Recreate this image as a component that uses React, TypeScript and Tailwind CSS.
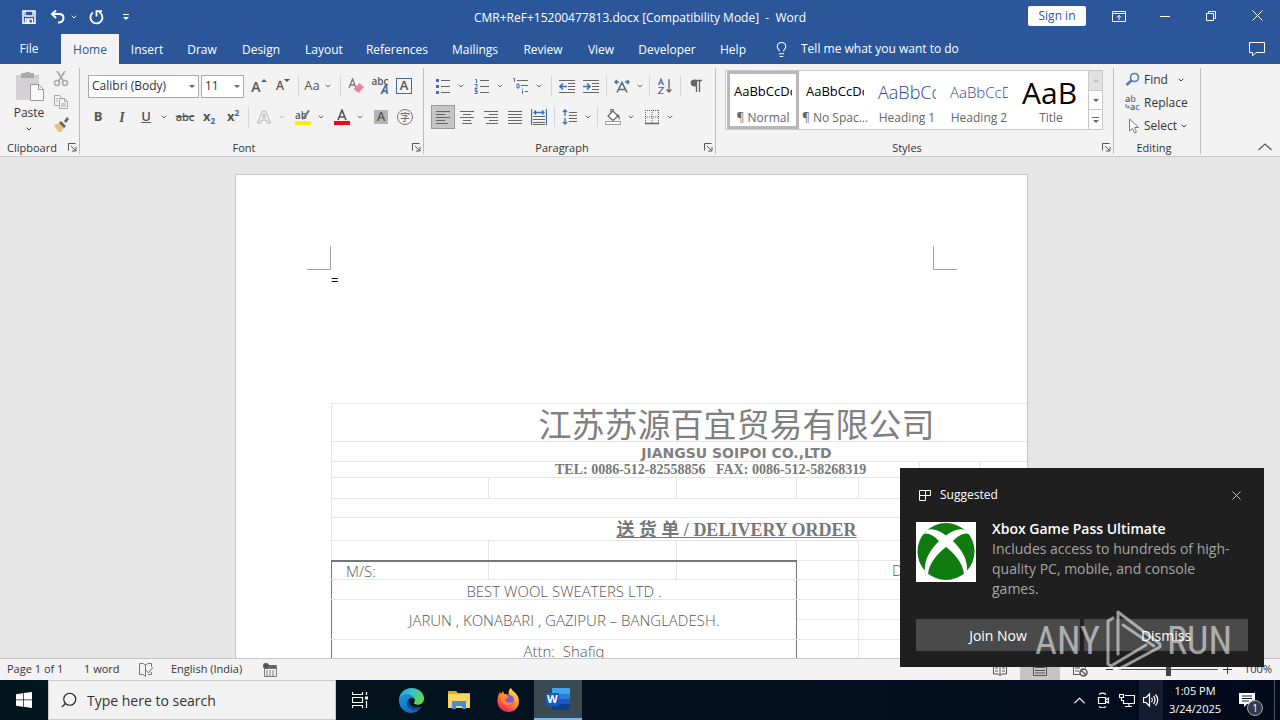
import type { ReactNode } from 'react';
import { ChevronDown, ChevronUp, Lightbulb, Search, X } from 'lucide-react';
import clsx from 'clsx';

const TABS = [
  { name: 'Insert', width: 'w-14' },
  { name: 'Draw', width: 'w-[54px]' },
  { name: 'Design', width: 'w-16' },
  { name: 'Layout', width: 'w-[62px]' },
  { name: 'References', width: 'w-[84px]' },
  { name: 'Mailings', width: 'w-[72px]' },
  { name: 'Review', width: 'w-16' },
  { name: 'View', width: 'w-[52px]' },
  { name: 'Developer', width: 'w-20' },
  { name: 'Help', width: 'w-[52px]' },
];

const STYLES = [
  { name: '¶ Normal', sample: 'AaBbCcDc', look: 'text-[13px] text-black' },
  { name: '¶ No Spac...', sample: 'AaBbCcDc', look: 'text-[13px] text-black' },
  { name: 'Heading 1', sample: 'AaBbCc', look: 'text-[18px] font-light text-[#1f4690]' },
  { name: 'Heading 2', sample: 'AaBbCcD', look: 'text-[15px] font-light text-[#1f4690]' },
  { name: 'Title', sample: 'AaB', look: 'text-[30px] text-black' },
];

function Icon({ children, size = 16, box = 16 }: { children: ReactNode; size?: number; box?: number }) {
  return (
    <svg width={size} height={size} viewBox={`0 0 ${box} ${box}`} fill="none" stroke="#666" strokeWidth="1" aria-hidden="true" className="shrink-0">
      {children}
    </svg>
  );
}

function Tool({ label, active, children }: { label: string; active?: boolean; children: ReactNode }) {
  return (
    <button
      aria-label={label}
      className={clsx('flex h-6 w-6 shrink-0 items-center justify-center text-[#555]', active && 'border border-[#9a9a9a] bg-[#c5c5c5]')}
    >
      {children}
    </button>
  );
}

function Caret({ label, last, faded }: { label: string; last?: boolean; faded?: boolean }) {
  return (
    <button aria-label={label} className={clsx('flex h-6 w-3 shrink-0 items-center justify-center', !last && 'mr-[3px]')}>
      <ChevronDown size={8} strokeWidth={3} color={faded ? '#b5b5b5' : '#666'} />
    </button>
  );
}

function Sep() {
  return <span className="mx-[3px] h-5 w-px shrink-0 bg-[#d5d5d5]" />;
}

function Group({ name, width, launcher, children }: { name: string; width: string; launcher?: boolean; children: ReactNode }) {
  return (
    <section aria-label={name} className={clsx('mt-1 flex h-[86px] shrink-0 flex-col border-r border-[#bdbdbd]', width)}>
      <div className="h-[70px]">{children}</div>
      <div className="flex h-4 items-center pt-[3px] pr-[2px]">
        <span className="flex-1 pr-1 text-center text-[11px] leading-4 text-[#333]">{name}</span>
        {launcher && (
          <button aria-label={`${name} settings`}>
            <Icon size={9} box={9}>
              <path d="M.5 7.5V.5h7M3 3l4.5 4.5M8 4v4H4" stroke="#555" />
            </Icon>
          </button>
        )}
      </div>
    </section>
  );
}

function TitleBar() {
  return (
    <header className="grid h-[34px] shrink-0 grid-cols-[1fr_auto_1fr] items-center bg-[#2b579a] text-white">
      <div className="flex items-center pl-[21px]">
        <button aria-label="Save">
          <Icon>
            <path d="M2 2h12v12.200H2z" stroke="#fff" strokeWidth="1.500" />
            <path d="M4 2v5h8V2M4.500 14v-4h7v4" stroke="#fff" strokeWidth="1.300" />
            <path d="M5.500 11h3v3h-3z" fill="#fff" stroke="none" />
          </Icon>
        </button>
        <button aria-label="Undo" className="ml-[13px]">
          <Icon>
            <path d="M6 1.500L2 5l4 4M2 5h7c6 0 6 8 0 8.500H8" stroke="#fff" strokeWidth="2" />
          </Icon>
        </button>
        <button aria-label="Undo list" className="ml-1">
          <ChevronDown size={8} strokeWidth={3} />
        </button>
        <button aria-label="Repeat" className="ml-[10px]">
          <Icon>
            <path d="M5 3.500a6 6 0 1 0 6-.5M8.500 7.500V2.200H14" stroke="#fff" strokeWidth="1.800" />
          </Icon>
        </button>
        <button aria-label="Customize toolbar" className="ml-[18px]">
          <Icon size={8} box={8}>
            <path d="M1 1.500h6" stroke="#fff" />
            <path d="M1 4h6L4 7z" fill="#fff" stroke="none" />
          </Icon>
        </button>
      </div>
      <h1 className="pt-[2px] text-xs whitespace-pre">CMR+ReF+15200477813.docx [Compatibility Mode]  -  Word</h1>
      <div className="flex h-full items-center justify-end pb-[3px]">
        <button className="h-5 w-[58px] rounded-xs bg-white pt-px text-xs text-[#2b579a]">Sign in</button>
        <button aria-label="Ribbon display options" className="ml-[26px]">
          <Icon size={14} box={14}>
            <path d="M.5 2.500h13v10H.5zM.5 4.500h13M7 11V6.500M4.800 8.500L7 6.300l2.200 2.200" stroke="#fff" />
          </Icon>
        </button>
        <button aria-label="Minimize" className="ml-[34px]">
          <Icon size={10} box={10}><path d="M0 5.500h10" stroke="#fff" /></Icon>
        </button>
        <button aria-label="Restore" className="ml-9">
          <Icon size={10} box={10}>
            <path d="M.5 2.500h7v7h-7zM2.500 2.500v-2h7v7h-2" stroke="#fff" />
          </Icon>
        </button>
        <button aria-label="Close" className="mr-[17px] ml-9">
          <Icon size={11} box={11}><path d="M.5.5l10 10M10.500.5l-10 10" stroke="#fff" /></Icon>
        </button>
      </div>
    </header>
  );
}

function TabBar() {
  return (
    <nav className="flex h-[30px] shrink-0 items-stretch bg-[#2b579a] text-xs text-white">
      <button className="mr-[3px] w-[58px]">File</button>
      <button className="w-[58px] bg-[#f3f3f3] pt-[2px] text-[#2b579a]">Home</button>
      {TABS.map(t => (
        <button key={t.name} className={clsx('pt-[2px] text-center', t.width)}>{t.name}</button>
      ))}
      <label className="ml-[14px] flex flex-1 items-center">
        <Lightbulb size={17} strokeWidth={1.5} />
        <input aria-label="Tell me what you want to do" placeholder="Tell me what you want to do" className="ml-[11px] w-48 placeholder:text-white" />
      </label>
      <button aria-label="Comments" className="mr-[14px]">
        <Icon size={18} box={18}>
          <path d="M1.500 2.500h15v10H8L4.500 16v-3.500h-3z" stroke="#fff" />
        </Icon>
      </button>
    </nav>
  );
}

function Combo({ label, value, width }: { label: string; value: string; width: string }) {
  return (
    <div className={clsx('relative h-[23px] shrink-0', width)}>
      <select aria-label={label} className="block h-full w-full appearance-none border border-[#ababab] bg-white pl-[3px] text-xs text-[#333]">
        <option>{value}</option>
      </select>
      <span className="pointer-events-none absolute top-[10px] right-1 border-x-[3px] border-t-[3px] border-x-transparent border-t-[#666]" />
    </div>
  );
}

function ClipboardGroup() {
  return (
    <Group name="Clipboard" width="w-20" launcher>
      <div className="flex pt-[3px]">
        <button className="ml-[13px] flex w-8 flex-col items-center text-xs text-[#333]">
          <Icon size={30} box={30}>
            <path d="M2 4h23v25H2z" fill="#d4d1d4" stroke="none" />
            <path d="M7 2h4a3 3 0 0 1 5 0h4v5H7z" fill="#aaa" stroke="none" />
            <path d="M16.500 13.500h8l5 5v11h-13z" fill="#fafafa" stroke="#999" />
            <path d="M24.500 13.500v5h5" stroke="#999" />
          </Icon>
          <span className="pt-[2px] leading-5">Paste</span>
          <ChevronDown size={8} strokeWidth={3} className="mt-[2px]" />
        </button>
        <div className="ml-2 flex flex-col gap-[7px]">
          <button aria-label="Cut">
            <Icon>
              <path d="M4 0l6.500 10M12 0L5.500 10" stroke="#aaa" strokeWidth="1.800" />
              <circle cx="4" cy="12" r="2.500" stroke="#aaa" strokeWidth="1.500" />
              <circle cx="12" cy="12" r="2.500" stroke="#aaa" strokeWidth="1.500" />
            </Icon>
          </button>
          <button aria-label="Copy">
            <Icon>
              <path d="M6 11.500H1.500v-10h5l3 3M6.500 4.500h5l3 3v7h-8zM11.500 4.500v3h3M3 4.500h2M3 7h2M8 10h5M8 12h5" stroke="#a8a8a8" />
            </Icon>
          </button>
          <button aria-label="Format painter">
            <Icon>
              <path d="M1 8l5-2 5 5-3 4H5z" fill="#e9c27b" stroke="none" />
              <path d="M6 6l2-2 5 5-2 2zM11 4l3-4 2 2-3 4z" fill="#666" stroke="none" />
            </Icon>
          </button>
        </div>
      </div>
    </Group>
  );
}

function FontGroup() {
  return (
    <Group name="Font" width="w-[344px]" launcher>
      <div className="flex h-9 items-center pl-2">
        <Combo label="Font" value="Calibri (Body)" width="w-[111px]" />
        <span className="w-[2px]" />
        <Combo label="Font size" value="11" width="w-[43px]" />
        <span className="w-[3px]" />
        <Tool label="Grow font"><span className="text-[14px] font-semibold">A</span><span className="mb-3 border-x-[3px] border-b-[3px] border-x-transparent border-b-[#44619d]" /></Tool>
        <Tool label="Shrink font"><span className="text-xs font-semibold">A</span><span className="mb-3 border-x-[3px] border-t-[3px] border-x-transparent border-t-[#555]" /></Tool>
        <Sep />
        <button className="w-5 text-[13px] text-[#555]">Aa</button>
        <Caret label="Change case options" />
        <Sep />
        <Tool label="Clear formatting">
          <Icon>
            <path d="M1 10L4.500 1 8 10M2.500 7h4" stroke="#777" strokeWidth="1.300" />
            <path d="M11.500 5L16 9l-5.500 6-5-4z" fill="#e8849b" stroke="none" />
          </Icon>
        </Tool>
        <Tool label="Phonetic guide">
          <span className="flex flex-col items-end text-[10px] leading-[8px] font-semibold"><span>abc</span><span className="text-xs leading-[10px] font-bold text-[#3d6cb0] italic">A</span></span>
        </Tool>
        <Tool label="Character border">
          <span className="flex h-4 w-4 items-center justify-center border border-[#44699f] text-[13px] font-semibold">A</span>
        </Tool>
      </div>
      <div className="flex h-[26px] items-center pl-[6px]">
        <Tool label="Bold"><span className="text-[13px] font-bold">B</span></Tool>
        <Tool label="Italic"><span className="font-['Liberation_Serif',serif] text-[14px] font-bold italic">I</span></Tool>
        <Tool label="Underline"><span className="text-[13px] font-semibold underline">U</span></Tool>
        <Caret label="Underline options" />
        <Tool label="Strikethrough"><span className="text-[11px] font-semibold line-through">abc</span></Tool>
        <Tool label="Subscript"><span className="text-[13px] font-bold">x</span><span className="mt-2 text-[8px] font-bold text-[#44619d]">2</span></Tool>
        <Tool label="Superscript"><span className="text-[13px] font-bold">x</span><span className="mb-2 text-[8px] font-bold text-[#44619d]">2</span></Tool>
        <Sep />
        <Tool label="Text effects">
          <Icon><path d="M1.500 14L6.500 2h3l5 12h-3l-1-3h-5l-1 3zM6.500 8.500h3L8 4.500z" stroke="#b5b5b5" /></Icon>
        </Tool>
        <Caret label="Text effects options" faded />
        <Tool label="Highlight">
          <Icon>
            <text x="0" y="10" fontSize="10" fontWeight="600" fill="#555" stroke="none">ab</text>
            <path d="M15 2l-6 8-2 1 1-3 5-7z" fill="#777" stroke="none" />
            <path d="M0 12h16v4H0z" fill="#ffee00" stroke="none" />
          </Icon>
        </Tool>
        <Caret label="Highlight options" />
        <Tool label="Font color">
          <Icon>
            <path d="M4 11L8 1l4 10M5.500 8h5" stroke="#555" strokeWidth="1.600" />
            <path d="M0 12h16v4H0z" fill="#e80c12" stroke="none" />
          </Icon>
        </Tool>
        <Caret label="Font color options" />
        <Tool label="Character shading"><span className="flex h-[14px] w-[14px] items-center justify-center bg-[#b5b5b5] text-[13px] font-semibold">A</span></Tool>
        <Tool label="Enclose characters"><span className="flex h-4 w-4 items-center justify-center rounded-full border border-[#777] text-[10px]">字</span></Tool>
      </div>
    </Group>
  );
}

function ParagraphGroup() {
  const blue = '#3f6db3';
  return (
    <Group name="Paragraph" width="w-[292px]" launcher>
      <div className="flex h-9 items-center pl-[7px]">
        <Tool label="Bullets">
          <Icon>
            <path d="M6 2.500h9M6 8.500h9M6 14.500h9" />
            <path d="M1 1h3v3H1zM1 7h3v3H1zM1 13h3v3H1z" fill={blue} stroke="none" />
          </Icon>
        </Tool>
        <Caret label="Bullet options" />
        <Tool label="Numbering">
          <Icon>
            <path d="M6 2.500h9M6 8.500h9M6 14.500h9" />
            <path d="M1 1.500h1.500V5M.5 6.500H3v2L1 10.500h2.500M.5 12h2.500v3.500H.5M1 13.500h2" stroke={blue} />
          </Icon>
        </Tool>
        <Caret label="Numbering options" />
        <Tool label="Multilevel list">
          <Icon>
            <path d="M4 2.500h11M8 7.500h7M12 13.500h3" />
            <path d="M0 .5h1.500V4M4 6h2v4H4zM9.500 10.500v1M9.500 12.500V16" stroke={blue} />
          </Icon>
        </Tool>
        <Caret label="Multilevel options" />
        <Sep />
        <Tool label="Decrease indent">
          <Icon>
            <path d="M0 2.500h16M9 5.500h7M9 8.500h7M9 11.500h7M0 14.500h16" />
            <path d="M8 8.500H1M4 5.500l-3 3 3 3" stroke={blue} strokeWidth="1.600" />
          </Icon>
        </Tool>
        <Tool label="Increase indent">
          <Icon>
            <path d="M0 2.500h16M9 5.500h7M9 8.500h7M9 11.500h7M0 14.500h16" />
            <path d="M0 8.500h7M4 5.500l3 3-3 3" stroke={blue} strokeWidth="1.600" />
          </Icon>
        </Tool>
        <Sep />
        <Tool label="Asian layout">
          <Icon>
            <path d="M3 14.500L8 4.500l5 10M5 11.500h6" strokeWidth="1.600" />
            <path d="M5 4H1M3 2L1 4l2 2M11 4h4M13 2l2 2-2 2" stroke={blue} strokeWidth="1.300" />
          </Icon>
        </Tool>
        <Caret label="Asian layout options" last />
        <Sep />
        <Tool label="Sort">
          <Icon>
            <path d="M1.500 7L4 1l2.500 6M2 5h4" stroke={blue} strokeWidth="1.200" />
            <path d="M1.500 9.500h5l-5 6h5" stroke="#8f5fb0" strokeWidth="1.200" />
            <path d="M12 1v13M9.500 11.500L12 14l2.500-2.500" strokeWidth="1.300" />
          </Icon>
        </Tool>
        <Sep />
        <Tool label="Show formatting marks">
          <Icon>
            <path d="M8 2H6a3 3 0 0 0 0 6h2z" fill="#666" />
            <path d="M8.500 14V2.500H14M11.500 14V2.500" strokeWidth="1.300" />
          </Icon>
        </Tool>
      </div>
      <div className="flex h-[26px] items-center pl-[7px]">
        <Tool label="Align left" active><Icon><path d="M1 2.500h14M1 5.500h9M1 8.500h14M1 11.500h9M1 14.500h12" /></Icon></Tool>
        <Tool label="Center"><Icon><path d="M1 2.500h14M4 5.500h8M1 8.500h14M4 11.500h8M3 14.500h10" /></Icon></Tool>
        <Tool label="Align right"><Icon><path d="M1 2.500h14M6 5.500h9M1 8.500h14M6 11.500h9M3 14.500h12" /></Icon></Tool>
        <Tool label="Justify"><Icon><path d="M1 2.500h14M1 5.500h14M1 8.500h14M1 11.500h14M1 14.500h14" /></Icon></Tool>
        <Tool label="Distribute">
          <Icon>
            <path d="M2 7.500h12M2 10.500h12M2 13.500h12M2 15.500h12" />
            <path d="M.5 0v16M15.500 0v16M3 3.500h10M5 1.500l-2 2 2 2M11 1.500l2 2-2 2" stroke={blue} strokeWidth="1.300" />
          </Icon>
        </Tool>
        <Sep />
        <Tool label="Line spacing">
          <Icon>
            <path d="M7 3.500h8M7 6.500h8M7 9.500h8M7 12.500h8" />
            <path d="M3 1v6M3 9v6M1 3l2-2 2 2M1 13l2 2 2-2" stroke={blue} strokeWidth="1.300" />
          </Icon>
        </Tool>
        <Caret label="Line spacing options" last />
        <Sep />
        <Tool label="Shading">
          <Icon>
            <path d="M3 7l5-5 5 5-5 4.500zM6 4V.5h2V3" fill="#fff" strokeWidth="1.200" />
            <path d="M12 5c3 1 3 4 2.500 6-1-1-1-3-3-4z" fill={blue} stroke="none" />
            <path d="M.5 12.500h15v3H.5z" stroke="#999" fill="#fff" />
          </Icon>
        </Tool>
        <Caret label="Shading options" />
        <Tool label="Borders">
          <Icon>
            <path d="M1.500 1v13M14.500 1v13M8 1v13M1 1.500h14M1 8h14" strokeDasharray="1 1" />
            <path d="M1 14.500h14" strokeWidth="1.500" />
          </Icon>
        </Tool>
        <Caret label="Border options" />
      </div>
    </Group>
  );
}

function StylesGroup() {
  return (
    <Group name="Styles" width="w-[398px]" launcher>
      <div className="mt-[2px] ml-[9px] flex h-[60px] w-[378px] border border-[#c8c8c8] bg-white pl-px">
        {STYLES.map((s, i) => (
          <button
            key={s.name}
            className={clsx('flex w-[72px] shrink-0 flex-col border-[3px]', i === 0 ? 'border-[#b8b8b8]' : 'border-transparent')}
          >
            <span className="flex h-9 w-full px-1">
              <span className={clsx('flex w-full items-center overflow-hidden whitespace-nowrap', s.look)}>{s.sample}</span>
            </span>
            <span className="w-full text-center text-xs leading-4 whitespace-nowrap text-[#666]">{s.name}</span>
          </button>
        ))}
        <div className="ml-auto flex w-[14px] flex-col divide-y divide-[#c8c8c8] border-l border-[#c8c8c8]">
          <button aria-label="Previous styles" className="flex flex-1 items-center justify-center bg-[#e1e1e1]">
            <span className="border-x-[3px] border-b-[3px] border-x-transparent border-b-[#bbb]" />
          </button>
          <button aria-label="Next styles" className="flex flex-1 items-center justify-center">
            <span className="border-x-[3px] border-t-[3px] border-x-transparent border-t-[#666]" />
          </button>
          <button aria-label="More styles" className="flex flex-1 flex-col items-center justify-center gap-[2px]">
            <span className="h-px w-[7px] bg-[#666]" />
            <span className="border-x-[3px] border-t-[3px] border-x-transparent border-t-[#666]" />
          </button>
        </div>
      </div>
    </Group>
  );
}

function EditingGroup() {
  return (
    <Group name="Editing" width="w-[87px]">
      <div className="flex flex-col pl-[11px] text-xs text-[#333]">
        <button className="flex h-[23px] items-center gap-[3px]">
          <Icon>
            <circle cx="9.500" cy="5.500" r="4" stroke="#4c7cbc" strokeWidth="1.600" />
            <path d="M6.500 8.500L1.500 13" stroke="#4c7cbc" strokeWidth="2.500" />
          </Icon>
          <span className="w-[30px] text-left">Find</span>
          <ChevronDown size={8} strokeWidth={3} />
        </button>
        <button className="flex h-[23px] items-center gap-[3px]">
          <Icon>
            <text x="0" y="7" fontSize="9" fontWeight="600" fill="#555" stroke="none">a<tspan fill="#8f5fb0">b</tspan></text>
            <text x="5" y="15" fontSize="9" fontWeight="600" fill="#555" stroke="none">a<tspan fill="#4c7cbc">c</tspan></text>
            <path d="M1 9v3h3M3 10.500L4.500 12 3 13.500" stroke="#4c7cbc" />
          </Icon>
          Replace
        </button>
        <button className="flex h-[23px] items-center gap-[3px]">
          <Icon>
            <path d="M4.500 1v12l3-2.500 2 4.500 2-1-2-4.500h4z" fill="#fff" stroke="#777" />
          </Icon>
          Select
          <ChevronDown size={8} strokeWidth={3} />
        </button>
      </div>
    </Group>
  );
}

function Ribbon() {
  return (
    <div className="flex h-[93px] shrink-0 border-b border-[#c8c8c8] bg-[#f3f3f3]">
      <ClipboardGroup />
      <FontGroup />
      <ParagraphGroup />
      <StylesGroup />
      <EditingGroup />
      <button aria-label="Collapse ribbon" className="mt-auto mr-[7px] mb-px ml-auto">
        <Icon size={16}><path d="M1.500 11L8 5l6.500 6" stroke="#555" strokeWidth="1.200" /></Icon>
      </button>
    </div>
  );
}

const cell = 'border border-[#e6e6e6] p-0';

// Empty grid cells to the right of the address box
function Blank({ count }: { count: number }) {
  return <>{Array.from({ length: count }, (_, i) => <td key={i} className={cell} />)}</>;
}

function DeliveryOrder() {
  return (
    <table className="mt-[115px] w-[811px] table-fixed border-collapse text-[15px] font-light text-[#555]">
      <colgroup>
        <col className="w-[157px]" />
        <col className="w-[188px]" />
        <col className="w-[120px]" />
        <col className="w-[62px]" />
        <col className="w-[61px]" />
        <col className="w-[60px]" />
        <col />
      </colgroup>
      <tbody className="text-center leading-4 whitespace-pre">
        <tr className="h-[38px]">
          <td colSpan={7} className={clsx(cell, "pt-[2px] font-['Noto_Sans_CJK_SC',sans-serif] text-[33px] leading-[35px] font-normal text-[#808080]")}>江苏苏源百宜贸易有限公司</td>
        </tr>
        <tr className="h-5">
          <td colSpan={7} className={clsx(cell, "pt-[3px] font-['DejaVu_Sans',sans-serif] text-[14px] font-bold text-[#808080]")}>JIANGSU SOIPOI CO.,LTD</td>
        </tr>
        <tr className="h-4">
          <td colSpan={5} className={clsx(cell, "pl-[223px] text-left font-['Liberation_Serif',serif] text-[14px] leading-[15px] font-bold text-[#777]")}>TEL: 0086-512-82558856   FAX: 0086-512-58268319</td>
          <Blank count={2} />
        </tr>
        <tr className="h-[21px]"><Blank count={7} /></tr>
        <tr className="h-[19px]"><td colSpan={7} className={cell} /></tr>
        <tr className="h-[23px]">
          <td colSpan={7} className={clsx(cell, "pt-[3px] font-['Liberation_Serif','Noto_Sans_CJK_SC',serif] text-[18px] leading-[19px] font-bold text-[#777] underline")}>送 货 单 / DELIVERY ORDER</td>
        </tr>
        <tr className="h-5"><Blank count={7} /></tr>
        <tr className="h-[19px]">
          <td className="border border-t-2 border-[#e6e6e6] border-t-[#777] border-l-[#777] p-0 pt-px pl-[14px] text-left">M/S:</td>
          <td className="border border-t-2 border-[#e6e6e6] border-t-[#777] p-0" />
          <td className="border border-t-2 border-[#e6e6e6] border-t-[#777] border-r-[#777] p-0" />
          <td className={cell} />
          <td className={clsx(cell, 'pl-[33px] text-left')}>D</td>
          <Blank count={2} />
        </tr>
        <tr className="h-5">
          <td colSpan={3} className="border border-x-[#777] border-y-[#e6e6e6] p-0 pt-[2px]">BEST WOOL SWEATERS LTD .</td>
          <Blank count={4} />
        </tr>
        <tr className="h-5">
          <td colSpan={3} rowSpan={2} className="border border-x-[#777] border-y-[#e6e6e6] p-0">JARUN , KONABARI , GAZIPUR – BANGLADESH.</td>
          <Blank count={4} />
        </tr>
        <tr className="h-5"><Blank count={4} /></tr>
        <tr className="h-[22px]">
          <td colSpan={3} className="border border-x-[#777] border-y-[#e6e6e6] p-0">Attn:  Shafiq</td>
          <Blank count={4} />
        </tr>
      </tbody>
    </table>
  );
}

function Workspace() {
  return (
    <main className="flex min-h-0 flex-1 justify-center overflow-hidden bg-[#e6e6e6] pt-[17px] pr-[17px]">
      <article className="h-[800px] w-[793px] shrink-0 overflow-hidden border border-[#c6c6c6] bg-white pt-[71px]">
        <div className="flex justify-between pr-[70px] pl-[71px]">
          <span className="h-6 w-6 border-r border-b border-[#a5a5a5]" />
          <span className="h-6 w-6 border-b border-l border-[#a5a5a5]" />
        </div>
        <div className="pl-[95px]">
          <p className="h-[18px] pt-[2px] text-[13px] leading-4 font-medium text-black">=</p>
          <DeliveryOrder />
        </div>
      </article>
    </main>
  );
}

function StatusBar() {
  return (
    <footer className="flex h-[22px] shrink-0 items-center border-t border-[#c6c6c6] bg-[#f3f3f3] text-[11px] text-[#333]">
      <span className="w-[84px] pl-[7px]">Page 1 of 1</span>
      <span className="w-[54px]">1 word</span>
      <button aria-label="Proofing">
        <Icon>
          <path d="M7.500 14.500V3L5 1.500H1.500v11H5zM7.500 3L10 1.500h3.500V5M10 12.500h3.500V10M8 8l2.500 3L15 5" stroke="#777" />
        </Icon>
      </button>
      <span className="ml-[17px] w-[92px]">English (India)</span>
      <button aria-label="Record macro">
        <Icon size={14} box={14}>
          <path d="M5 2.500h8.500v11h-12V6M1.500 5.500h12" stroke="#777" />
          <path d="M6 2h7v3H6z" fill="#666" stroke="none" />
          <path d="M3 8h9M3 10h9M3 12h9" stroke="#777" strokeDasharray="2 1" />
          <circle cx="3" cy="3" r="3" fill="#555" stroke="none" />
        </Icon>
      </button>
      <div className="ml-auto flex h-full items-center pr-2">
        <button aria-label="Read mode" className="flex w-10 justify-center">
          <Icon><path d="M8 13.500L6 12H1.500V3H6l2 1.500L10 3h4.500v9H10zM8 4.500v9M3 6h3M3 9h3M10 6h3M10 9h3" stroke="#555" /></Icon>
        </button>
        <button aria-label="Print layout" className="flex h-full w-10 items-center justify-center bg-[#c5c5c5]">
          <Icon><path d="M1.500 2.500h13v11h-13zM3 5.500h10M3 8.500h10M3 11h10" stroke="#555" /></Icon>
        </button>
        <button aria-label="Web layout" className="mr-[6px] flex w-10 justify-center">
          <Icon>
            <path d="M9 12.500H1.500V3h12v3M3 6h5M3 9h4" stroke="#555" />
            <circle cx="11.500" cy="10.500" r="3.500" stroke="#555" strokeWidth="1.500" />
            <path d="M9 8l5 5" stroke="#555" strokeWidth="1.500" />
          </Icon>
        </button>
        <button aria-label="Zoom out" className="h-px w-[7px] bg-[#333]" />
        <input
          type="range"
          aria-label="Zoom"
          defaultValue={50}
          className="mx-[5px] h-3 w-[100px] appearance-none bg-[linear-gradient(#555,#555)] bg-[length:100%_1px] bg-center bg-no-repeat [&::-webkit-slider-thumb]:h-3 [&::-webkit-slider-thumb]:w-[5px] [&::-webkit-slider-thumb]:appearance-none [&::-webkit-slider-thumb]:bg-[#444]"
        />
        <button aria-label="Zoom in">
          <Icon size={9} box={9}><path d="M0 4.500h9M4.500 0v9" stroke="#333" /></Icon>
        </button>
        <span className="ml-3">100%</span>
      </div>
    </footer>
  );
}

function EdgeLogo() {
  return (
    <svg width="25" height="25" viewBox="0 0 24 24" aria-hidden="true">
      <defs>
        <linearGradient id="edgeTop" x1="0" y1="0" x2="1" y2="0.500">
          <stop offset="0" stopColor="#2a9be0" />
          <stop offset="0.500" stopColor="#35c1c9" />
          <stop offset="1" stopColor="#62d84e" />
        </linearGradient>
        <linearGradient id="edgeBottom" x1="0" y1="0" x2="1" y2="1">
          <stop offset="0" stopColor="#2196dc" />
          <stop offset="1" stopColor="#0f5cab" />
        </linearGradient>
      </defs>
      <path d="M0 12C0 5 5.500 0 12 0s12 4.500 12 10c0 4-3 6-6 6-4 0-4-1.500-3-3 1-2-1-5-4-5-6 0-7 6-5 9z" fill="url(#edgeTop)" />
      <path d="M0 12c0-4 4-6 8-6 3 0 6 2 6.500 4.500C10 8 8 12 10 15c2 4 7 5 11.500 3C19 22 16 24 12 24 5 24 0 18.500 0 12z" fill="url(#edgeBottom)" />
      <path d="M14.500 10.500C10 8 8 12 10 15c2 4 7 5 11.500 3-3 4-8 4-11 2-4-3-4-9 1-11z" fill="#0c4a8f" />
    </svg>
  );
}

function FirefoxLogo() {
  return (
    <svg width="24" height="24" viewBox="0 0 24 24" aria-hidden="true">
      <defs>
        <linearGradient id="fox" x1="0.800" y1="0" x2="0.200" y2="1">
          <stop offset="0" stopColor="#fff04a" />
          <stop offset="0.450" stopColor="#ff9127" />
          <stop offset="0.800" stopColor="#ff3b50" />
          <stop offset="1" stopColor="#e31587" />
        </linearGradient>
      </defs>
      <path d="M14 0c1 3 4 4 6 7 4 6 2 16-8 17C4 24 0 18 .5 12 .7 8 2 6 3 4l1 2 2-3 1 3c2 0 3 0 5 1-1-3 0-6 2-7z" fill="url(#fox)" />
      <circle cx="12" cy="12" r="5" fill="#8455d9" />
      <path d="M4 8c3-2 6 0 8 1-1 2-4 1-4 3 1 4 6 3 8 1-1 5-9 6-11 1-1-2-1-4-1-6z" fill="#ff8a2a" />
    </svg>
  );
}

function WordLogo() {
  return (
    <svg width="24" height="22" viewBox="0 0 24 22" aria-hidden="true">
      <path d="M6 0h18v6H6z" fill="#41a5ee" />
      <path d="M6 6h18v5H6z" fill="#2b7cd3" />
      <path d="M6 11h18v5H6z" fill="#185abd" />
      <path d="M6 16h18v6H6z" fill="#103f91" />
      <path d="M0 5h13v13H0z" fill="#185abd" />
      <text x="1" y="15" fontSize="11" fontWeight="700" fill="#fff">W</text>
    </svg>
  );
}

function TaskBar() {
  return (
    <div className="flex h-10 shrink-0 items-stretch bg-linear-to-r from-[#03171f] to-[#020a1c] text-white">
      <button aria-label="Start" className="flex w-12 items-center justify-center">
        <svg width="16" height="16" viewBox="0 0 16 16" fill="#fff" aria-hidden="true">
          <path d="M0 2.200L7 1.200v6.400H0zM7.700 1.100L16 0v7.600H7.700zM0 8.300h7v6.500l-7-1zM7.700 8.300H16V16l-8.300-1.200z" />
        </svg>
      </button>
      <label className="flex w-72 items-center border border-[#c8c8c8] bg-[#f2f2f2] text-[#222]">
        <Search size={18} strokeWidth={1.5} className="ml-[11px] -scale-x-100" />
        <input aria-label="Search" placeholder="Type here to search" className="ml-[9px] w-56 text-[14px] placeholder:text-[#333]" />
      </label>
      <button aria-label="Task view" className="flex w-12 items-center justify-center">
        <Icon size={16}>
          <path d="M.5 0v2.500h10V0M.5 5.500h10v5H.5zM.5 16v-2.500h10V16M14.500 0v3M14.500 9v7" stroke="#fff" strokeWidth="1.200" />
          <path d="M13 4.500h3v3h-3z" fill="#fff" stroke="none" />
        </Icon>
      </button>
      <button aria-label="Edge" className="ml-[3px] flex w-12 items-center justify-center"><EdgeLogo /></button>
      <button aria-label="File Explorer" className="flex w-12 items-center justify-center">
        <svg width="22" height="18" viewBox="0 0 22 18" aria-hidden="true">
          <path d="M0 0h8l2 2h12v15H0z" fill="#e9a52c" />
          <path d="M0 3h22v14H0z" fill="#fcd462" />
          <path d="M4 10h14v8h-4v-3H8v3H4z" fill="#3f92d2" />
        </svg>
      </button>
      <button aria-label="Firefox" className="ml-[2px] flex w-12 items-center justify-center"><FirefoxLogo /></button>
      <button aria-label="Word" className="ml-px flex w-12 items-center justify-center border-b-2 border-[#76b9ed] bg-[#3a4a52]"><WordLogo /></button>

      <div className="ml-auto flex items-stretch">
        <button aria-label="Hidden icons" className="flex w-6 items-center justify-center"><ChevronUp size={19} strokeWidth={1.5} /></button>
        <button aria-label="Meet now" className="flex w-6 items-center justify-center">
          <Icon>
            <path d="M3.500 5.500h7v6h-7zM10.500 8l3-2v5l-3-2M4 2.500c2-1.500 5-1.500 7 0M4 14.500c2 1.500 5 1.500 7 0" stroke="#fff" strokeWidth="1.200" />
          </Icon>
        </button>
        <button aria-label="Network" className="flex w-6 items-center justify-center">
          <Icon>
            <path d="M6 3.500h9.500v8H4.500V8M10 11.500v3M6 14.500h7M.5 2.500h4v3h-4zM2.500 5.500v3h2" stroke="#fff" strokeWidth="1.200" />
          </Icon>
        </button>
        <button aria-label="Volume" className="flex w-6 items-center justify-center bg-[#151c2f]">
          <Icon>
            <path d="M.5 5.500H3L6.500 2v12L3 10.500H.5zM8.500 6c1 1 1 3 0 4M10.500 4c2 2 2 6 0 8M12.500 2.500c3 3 3 8 0 11" stroke="#fff" strokeWidth="1.200" />
          </Icon>
        </button>
        <time className="flex w-16 flex-col items-center justify-center text-[11px] leading-[18px]">
          <span>1:05 PM</span>
          <span>3/24/2025</span>
        </time>
        <button aria-label="Notifications" className="relative flex w-12 items-center justify-center border-r border-[#4a5262] pr-2">
          <Icon>
            <path d="M0 1h16v11H8l-3 3v-3H0z" fill="#fff" stroke="none" />
            <path d="M3 4h10M3 6.500h10M3 9h7" stroke="#10182b" />
          </Icon>
          <span className="absolute top-5 right-[11px] flex h-4 w-4 items-center justify-center rounded-full border border-[#aaa] bg-[#333a48] text-[10px]">1</span>
        </button>
        <span className="w-[5px]" />
      </div>
    </div>
  );
}

function XboxLogo() {
  return (
    <svg width="60" height="60" viewBox="0 0 60 60" className="shrink-0 bg-white" aria-hidden="true">
      <circle cx="30" cy="29.500" r="28.500" fill="#107c10" />
      <path d="M11 8C17 6 24 9 30 13.500 36 9 43 6 49 8l4 4c-5-2-11 2-16 7 9 9 15 19 14 30l-3 3C47 41 38 31 30 25 22 31 13 41 12 52l-3-3C8 38 14 28 23 19 18 14 12 10 7 12z" fill="#fff" />
    </svg>
  );
}

function Toast() {
  return (
    <aside className="absolute right-4 bottom-[53px] flex h-[199px] w-[364px] flex-col bg-[#1f1f1f] px-4 pb-4 text-white">
      <div className="flex h-[54px] items-center">
        <span className="flex w-6 pl-[3px]">
          <Icon size={12} box={12}>
            <path d="M.5 1.500h11v5H.5zM.5 6.500v5h6v-10" stroke="#fff" />
          </Icon>
        </span>
        <span className="flex-1 text-xs">Suggested</span>
        <button aria-label="Close" className="mr-1"><X size={15} strokeWidth={1.500} color="#ccc" /></button>
      </div>
      <div className="flex flex-1 gap-4">
        <XboxLogo />
        <div className="pr-2 text-[14px] leading-5">
          <h2 className="-mt-[3px] font-semibold">Xbox Game Pass Ultimate</h2>
          <p className="text-[#a5a5a5]">Includes access to hundreds of high-quality PC, mobile, and console games.</p>
        </div>
      </div>
      <div className="flex h-8 gap-1 text-[14px]">
        <button className="flex-1 bg-[#4a4a4a]">Join Now</button>
        <button className="flex-1 bg-[#4a4a4a]">Dismiss</button>
      </div>
    </aside>
  );
}

function Watermark() {
  return (
    <div className="pointer-events-none absolute right-[48px] bottom-[48px] flex h-[64px] items-center gap-[5px] font-['Roboto_Condensed','Roboto',sans-serif] text-[38px] text-white opacity-55">
      <span className="pt-[2px]">ANY</span>
      <svg width="57" height="62" viewBox="0 0 57 62" fill="none" stroke="#fff" strokeWidth="3" strokeLinejoin="round" strokeLinecap="round" aria-hidden="true">
        <path d="M8 9l-5 3v43l3 2 35-21" />
        <path d="M13 45V3l42 32v3L14 60l-3-1M18 16l31 21" />
      </svg>
      <span className="pt-[2px]">RUN</span>
    </div>
  );
}

export default function App() {
  return (
    <div className="relative flex h-screen flex-col overflow-hidden font-['Open_Sans','Noto_Sans','Noto_Sans_CJK_SC',sans-serif]">
      <TitleBar />
      <TabBar />
      <Ribbon />
      <Workspace />
      <StatusBar />
      <TaskBar />
      <Toast />
      <Watermark />
    </div>
  );
}
